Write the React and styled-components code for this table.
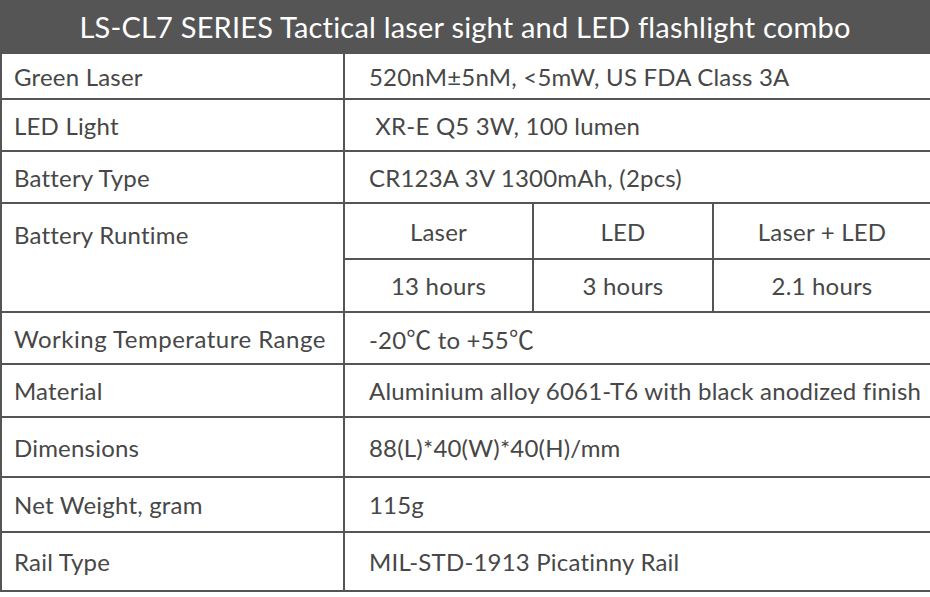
import React from "react";
import styled, { createGlobalStyle } from "styled-components";

const Global = createGlobalStyle`
  html, body { margin: 0; padding: 0; background: #fff; }
  body { font-family: Lato, "Open Sans", sans-serif; }
`;

const Page = styled.div`
  width: 930px;
  height: 597px;
  background: #fff;
  overflow: hidden;
`;

const Title = styled.div`
  height: 52px;
  background: #555555;
  color: #fff;
  font-size: 29px;
  letter-spacing: 0.2px;
  display: flex;
  align-items: center;
  justify-content: center;
`;

const Table = styled.table`
  width: 930px;
  table-layout: fixed;
  border-collapse: collapse;
  color: #474747;
  font-size: 24px;
  letter-spacing: 0.2px;
`;

const Row = styled.tr`
  height: ${(p) => p.$h}px;
`;

const Label = styled.td`
  border: 2px solid #555;
  padding: 0 0 0 12px;
  vertical-align: ${(p) => (p.$top ? "top" : "middle")};
  padding-top: ${(p) => (p.$top ? "16px" : "0")};
  white-space: nowrap;
  letter-spacing: ${(p) => p.$ls ?? 0.2}px;
`;

const Value = styled.td`
  border: 2px solid #555;
  padding: 0 0 0 24px;
  white-space: nowrap;
`;

const Sub = styled.td`
  border: 2px solid #555;
  text-align: center;
  white-space: nowrap;
`;

const Deg = styled.span`
  font-family: "Noto Sans CJK SC", sans-serif;
  font-size: 25px;
  letter-spacing: 0;
`;

const rows = [
  { label: "Green Laser", value: "520nM±5nM, <5mW, US FDA Class 3A", h: 46 },
  { label: "LED Light", value: "\u00a0XR-E Q5 3W, 100 lumen", h: 52 },
  { label: "Battery Type", value: "CR123A 3V 1300mAh, (2pcs)", h: 52 },
];

const rows2 = [
  {
    label: "Working Temperature Range",
    ls: 0.5,
    value: (
      <>
        -20<Deg>℃</Deg> to +55<Deg>℃</Deg>
      </>
    ),
    h: 52,
  },
  { label: "Material", value: "Aluminium alloy 6061-T6 with black anodized finish", h: 53 },
  { label: "Dimensions", value: "88(L)*40(W)*40(H)/mm", h: 60 },
  { label: "Net Weight, gram", value: "115g", h: 55 },
  { label: "Rail Type", value: "MIL-STD-1913 Picatinny Rail", h: 59 },
];

export default function App() {
  return (
    <Page>
      <Global />
      <Title>LS-CL7 SERIES Tactical laser sight and LED flashlight combo</Title>
      <Table>
        <colgroup>
          <col style={{ width: 343 }} />
          <col style={{ width: 189 }} />
          <col style={{ width: 180 }} />
          <col style={{ width: 218 }} />
        </colgroup>
        <tbody>
          {rows.map((r) => (
            <Row key={r.label} $h={r.h}>
              <Label>{r.label}</Label>
              <Value colSpan={3}>{r.value}</Value>
            </Row>
          ))}
          <Row $h={56}>
            <Label rowSpan={2} $top>Battery Runtime</Label>
            <Sub>Laser</Sub>
            <Sub>LED</Sub>
            <Sub>Laser + LED</Sub>
          </Row>
          <Row $h={53}>
            <Sub>13 hours</Sub>
            <Sub>3 hours</Sub>
            <Sub>2.1 hours</Sub>
          </Row>
          {rows2.map((r) => (
            <Row key={r.label} $h={r.h}>
              <Label $ls={r.ls}>{r.label}</Label>
              <Value colSpan={3}>{r.value}</Value>
            </Row>
          ))}
        </tbody>
      </Table>
    </Page>
  );
}
